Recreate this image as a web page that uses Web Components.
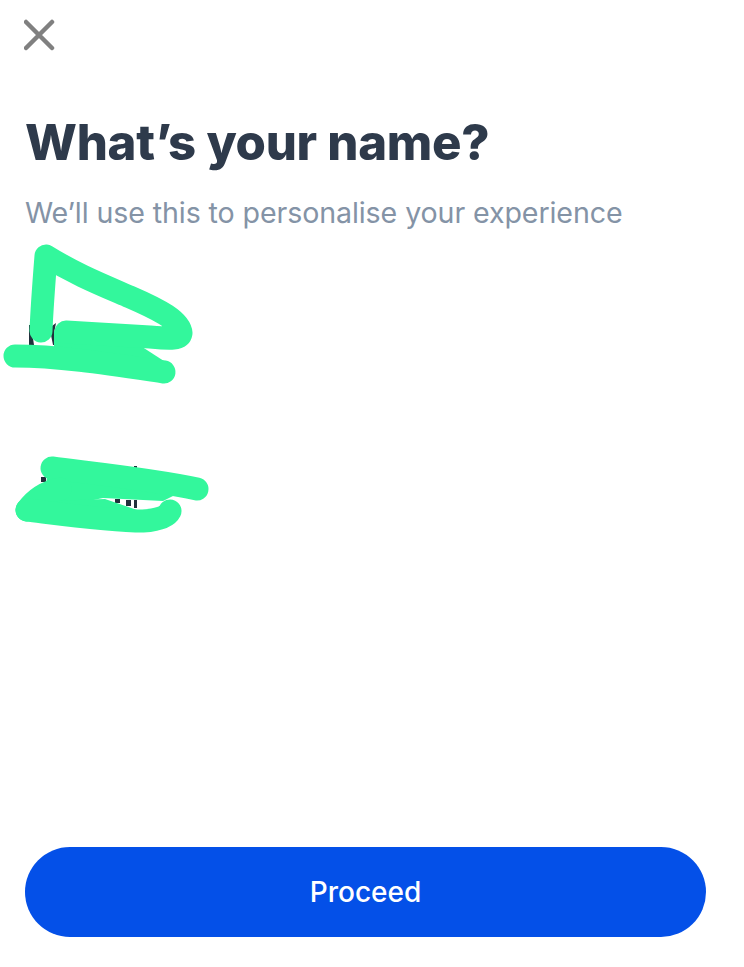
<!DOCTYPE html>
<html lang="en">
<head>
<meta charset="utf-8">
<title>What's your name?</title>
<style>
html,body{margin:0;padding:0;background:#fff;height:100%}
body{font-family:Inter,"Noto Sans",sans-serif}
</style>
</head>
<body>
<name-screen>
  <close-button slot="top"></close-button>
  <span slot="title">What’s your name?</span>
  <span slot="subtitle">We’ll use this to personalise your experience</span>
  <scribble-field slot="fields" variant="first"></scribble-field>
  <scribble-field slot="fields" variant="last"></scribble-field>
  <primary-button slot="action">Proceed</primary-button>
</name-screen>
<script>
function define(name, html, setup){
  customElements.define(name, class extends HTMLElement{
    constructor(){super();this.attachShadow({mode:'open'}).innerHTML=html;}
    connectedCallback(){ if(setup) setup(this); }
  });
}
define('name-screen',`<style>
:host{display:flex;flex-direction:column;box-sizing:border-box;height:967px;padding:19px 38px 30px 25px;background:#fff;overflow:hidden}
h1{margin:61px 0 0;font:800 49.1px/60px Inter,sans-serif;letter-spacing:-.3px;color:#2e3a4b;white-space:nowrap}
p{margin:23px 0 0;font:400 28.6px/36px Inter,sans-serif;letter-spacing:-.1px;color:#8493a6;white-space:nowrap}
.fields{display:flex;flex-direction:column;flex:1;margin-left:-25px}
</style>
<slot name="top"></slot>
<h1><slot name="title"></slot></h1>
<p><slot name="subtitle"></slot></p>
<div class="fields"><slot name="fields"></slot></div>
<slot name="action"></slot>`);
define('close-button',`<style>
:host{display:block;width:32px;height:32px;margin-left:-1px}
svg{display:block}
</style>
<svg width="32" height="32" viewBox="0 0 32 32" fill="none" stroke="#808080" stroke-width="4.5" stroke-linecap="round"><path d="M2 3 28 29M28 3 2 29"/></svg>`);
const G='#33f79c';
const art={
first:{h:155,mt:0,svg:`<svg width="230" height="155" viewBox="0 0 230 155">
<g fill="#22303c"><path d="M29 94h2l3 20h-5zM52 95l4-3-2 10 4 12h-5l-2-10z"/></g>
<path fill="${G}" d="M54 100 L66 92 L133 110 L167 132 L165 141 L54 130Z"/>
<g fill="none" stroke="${G}" stroke-linecap="round" stroke-linejoin="round" stroke-width="23">
<path d="M41 100 C42 75 44 50 46 25 C75 43 100 53 130 66 C160 79 180 90 181 102 C180 108 172 108 150 106 L66 101"/>
<path d="M15 125 C60 125 110 133 164 141"/>
</g></svg>`},
last:{h:130,mt:61,svg:`<svg width="230" height="130" viewBox="0 0 230 130">
<g fill="#22303c"><rect x="41" y="30" width="5" height="5"/><rect x="134" y="19" width="3" height="4"/><rect x="115" y="52" width="5" height="4"/><rect x="126" y="53" width="5" height="6"/><rect x="134" y="53" width="3" height="8"/></g>
<path fill="${G}" d="M48 24 L185 35 L175 48 L163 54 L103 51 L60 60 L44 50Z"/>
<path fill="${G}" d="M24 55 L105 52 L143 65 L143 78 L35 70Z"/>
<g fill="none" stroke="${G}" stroke-linecap="round" stroke-linejoin="round" stroke-width="23">
<path d="M52 21 C90 26 150 32 197 42"/>
<path d="M27 63 C35 52 45 45 60 42"/>
<path d="M27 63 C60 67 110 74 143 74 C158 73 167 70 170 64"/>
</g></svg>`}
};
define('scribble-field',`<style>
:host{display:block}
.box{line-height:0}
svg{display:block}
</style><div class="box"></div>`,el=>{
  const a=art[el.getAttribute('variant')];
  el.shadowRoot.querySelector('.box').innerHTML=a.svg;
  el.style.marginTop=a.mt+'px';
});
define('primary-button',`<style>
:host{display:block;height:90px;border-radius:45px;background:#0450e8;color:#fff;font:500 28px/90px Inter,sans-serif;text-align:center}
</style><slot></slot>`);
</script>
</body>
</html>
